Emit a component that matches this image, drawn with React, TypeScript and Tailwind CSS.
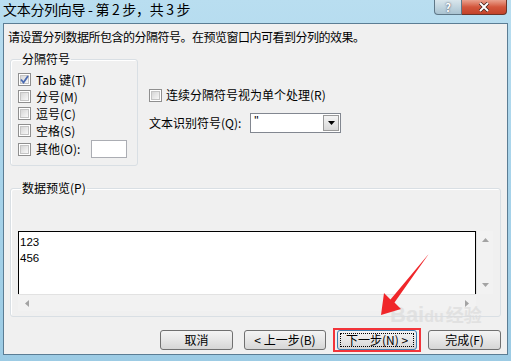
import React from "react";

const cjk = { fontFamily: '"Noto Sans CJK SC", "Liberation Sans", sans-serif' };

function Check({ checked = false }: { checked?: boolean }) {
  return (
    <span className="flex h-[13px] w-[13px] shrink-0 items-center justify-center border border-[#8f8f8f] bg-white p-px">
      <span className="relative flex h-full w-full items-center justify-center border border-[#c4c4c4] bg-gradient-to-br from-[#d6d6d6] to-[#f8f8f8]">
        {checked && (
          <svg width="9" height="9" viewBox="0 0 9 9" className="absolute">
            <path d="M1 4.5 L3.5 7.5 L8 1" fill="none" stroke="#4a6ab0" strokeWidth="1.8" />
          </svg>
        )}
      </span>
    </span>
  );
}

function Row({ checked, label }: { checked?: boolean; label: string }) {
  return (
    <div className="flex h-[17px] items-center">
      <Check checked={checked} />
      <span className="ml-[5px] text-[12px] leading-[14px] text-black">{label}</span>
    </div>
  );
}

function Btn({ label, width, focused = false }: { label: string; width: string; focused?: boolean }) {
  return (
    <button
      className={`flex h-[20px] ${width} items-center justify-center rounded-[3px] border bg-gradient-to-b from-[#f4f4f4] via-[#e6e6e6] to-[#d6d6d6] text-[12px] leading-[14px] text-black ${
        focused ? "border-[#3c7fb1] p-[2px]" : "border-[#707070]"
      }`}
    >
      {focused ? (
        <span className="flex h-full w-full items-center justify-center border border-dotted border-black">{label}</span>
      ) : (
        label
      )}
    </button>
  );
}

function Tri({ dir }: { dir: "up" | "down" | "left" | "right" }) {
  const d = {
    up: "M0 4 L3.5 0 L7 4 Z",
    down: "M0 0 L3.5 4 L7 0 Z",
    left: "M4 0 L0 3.5 L4 7 Z",
    right: "M0 0 L4 3.5 L0 7 Z",
  }[dir];
  const vert = dir === "up" || dir === "down";
  return (
    <svg width={vert ? 7 : 4} height={vert ? 4 : 7} viewBox={vert ? "0 0 7 4" : "0 0 4 7"}>
      <path d={d} fill="#a3a3a3" />
    </svg>
  );
}

export default function App() {
  return (
    <div
      className="relative flex h-[361px] w-[511px] flex-col overflow-hidden bg-gradient-to-b from-[#b9def0] via-[#a7d3ea] to-[#9ccbe4]"
      style={cjk}
    >
      {/* title bar */}
      <div className="flex h-[23px] shrink-0 items-start">
        <span className="ml-[3px] mt-[1px] text-[14px] leading-[17px] tracking-[-0.3px] text-black">
          文本分列向导 - 第 2 步，共 3 步
        </span>
        <div className="ml-auto mr-[4px] flex h-[15px]">
          <div className="flex w-[28px] items-center justify-center rounded-bl-[4px] border border-t-0 border-[#5e7787] bg-gradient-to-b from-[#d9e6ec] to-[#a9c3d1] text-[11px] font-bold leading-[12px] text-white [text-shadow:0_0_2px_#334]">
            ?
          </div>
          <div className="flex w-[45px] items-center justify-center rounded-br-[4px] border border-l-0 border-t-0 border-[#6b3428] bg-gradient-to-b from-[#e9a18e] via-[#d3563c] to-[#c3432a]">
            <svg width="12" height="10" viewBox="0 0 12 10">
              <path d="M2 1 L10 9 M10 1 L2 9" stroke="#3a1d18" strokeWidth="3.4" />
              <path d="M2 1 L10 9 M10 1 L2 9" stroke="#ffffff" strokeWidth="2" />
            </svg>
          </div>
        </div>
      </div>

      {/* client area */}
      <div className="mx-[3px] flex h-[332px] shrink-0 flex-col border border-[#5b7d94] bg-[#f0f0f0]">
        <p className="ml-[4px] mt-[5px] text-[12px] leading-[16px] tracking-[-0.5px] text-black">
          请设置分列数据所包含的分隔符号。在预览窗口内可看到分列的效果。
        </p>

        <div className="mt-[7px] flex">
          <fieldset className="ml-[6px] h-[114px] w-[128px] rounded-[3px] border border-[#d9dfe4] pb-[5px] pl-[7px] pt-[5px] shadow-[inset_1px_1px_0_#fff]">
            <legend className="ml-[3px] px-[1px] text-[12px] leading-[14px] text-black">分隔符号</legend>
            <Row checked label="Tab 键(T)" />
            <Row label="分号(M)" />
            <Row label="逗号(C)" />
            <Row label="空格(S)" />
            <div className="flex h-[20px] items-center">
              <Check />
              <span className="ml-[5px] text-[12px] leading-[14px] text-black">其他(O):</span>
              <span className="ml-[11px] h-[18px] w-[36px] border border-[#abadb3] bg-white" />
            </div>
          </fieldset>

          <div className="ml-[11px] flex flex-col pt-[35px]">
            <div className="flex h-[16px] items-center">
              <Check />
              <span className="ml-[4px] text-[12px] leading-[14px] text-black">连续分隔符号视为单个处理(R)</span>
            </div>
            <div className="mt-[10px] flex h-[20px] items-center">
              <span className="text-[12px] leading-[14px] text-black">文本识别符号(Q):</span>
              <div className="ml-[9px] flex h-[20px] w-[91px] border border-[#828790] bg-white">
                <span className="ml-[3px] flex-1 text-[12px] leading-[14px] text-black" style={{ fontFamily: '"Liberation Sans", sans-serif' }}>
                  "
                </span>
                <span className="m-px flex w-[16px] items-center justify-center border border-[#9a9a9a] bg-gradient-to-b from-[#f4f4f4] to-[#d8d8d8]">
                  <svg width="7" height="4" viewBox="0 0 7 4">
                    <path d="M0 0 L3.5 4 L7 0 Z" fill="#000" />
                  </svg>
                </span>
              </div>
            </div>
          </div>
        </div>

        <fieldset className="ml-[6px] mr-[6px] mt-[15px] h-[136px] rounded-[3px] border border-[#d9dfe4] pb-[3px] pl-[7px] pt-[36px] shadow-[inset_1px_1px_0_#fff]">
          <legend className="ml-[3px] px-[1px] text-[12px] leading-[14px] text-black">数据预览(P)</legend>
          <div className="grid w-[475px] grid-cols-[458px_17px] grid-rows-[63px_17px]">
            <div className="border border-b-0 border-black bg-white pl-px pt-[2px] text-[11.5px] leading-[16px] text-black" style={{ fontFamily: '"Liberation Sans", sans-serif' }}>
              <div>123</div>
              <div>456</div>
            </div>
            <div className="flex flex-col items-center justify-between border-l border-[#e2e2e2] bg-[#f2f2f2] py-[7px]">
              <Tri dir="up" />
              <Tri dir="down" />
            </div>
            <div className="flex items-center justify-between border-t border-[#e2e2e2] bg-[#f2f2f2] px-[7px]">
              <Tri dir="left" />
              <Tri dir="right" />
            </div>
            <div className="bg-[#f0f0f0]" />
          </div>
        </fieldset>

        <div className="mr-[6px] mt-[11px] flex items-center justify-end">
          <Btn label="取消" width="w-[73px]" />
          <div className="ml-[11px]">
            <Btn label="< 上一步(B)" width="w-[82px]" />
          </div>
          <div className="ml-[7px] border-2 border-[#f2343a] px-[2px]">
            <Btn label="下一步(N) >" width="w-[80px]" focused />
          </div>
          <div className="ml-[7px]">
            <Btn label="完成(F)" width="w-[73px]" />
          </div>
        </div>
      </div>

      {/* watermark */}
      <div className="pointer-events-none absolute left-[390px] top-[303px] flex items-baseline text-[22px] font-bold leading-[24px] text-[#dcdcdc] opacity-70" style={{ fontFamily: '"Liberation Sans", "Noto Sans CJK SC", sans-serif' }}>
        <span>Bai</span>
        <span className="text-[16px]">du</span>
        <span className="ml-[2px] text-[18px]">经验</span>
      </div>

      {/* annotation arrow */}
      <svg className="pointer-events-none absolute left-0 top-0" width="511" height="361" viewBox="0 0 511 361">
        <polygon
          points="428.4,254.6 394.5,302.5 401,309 381,315 384,293 390.5,299.5 427.6,255.3"
          fill="#f0262a"
        />
      </svg>
    </div>
  );
}
